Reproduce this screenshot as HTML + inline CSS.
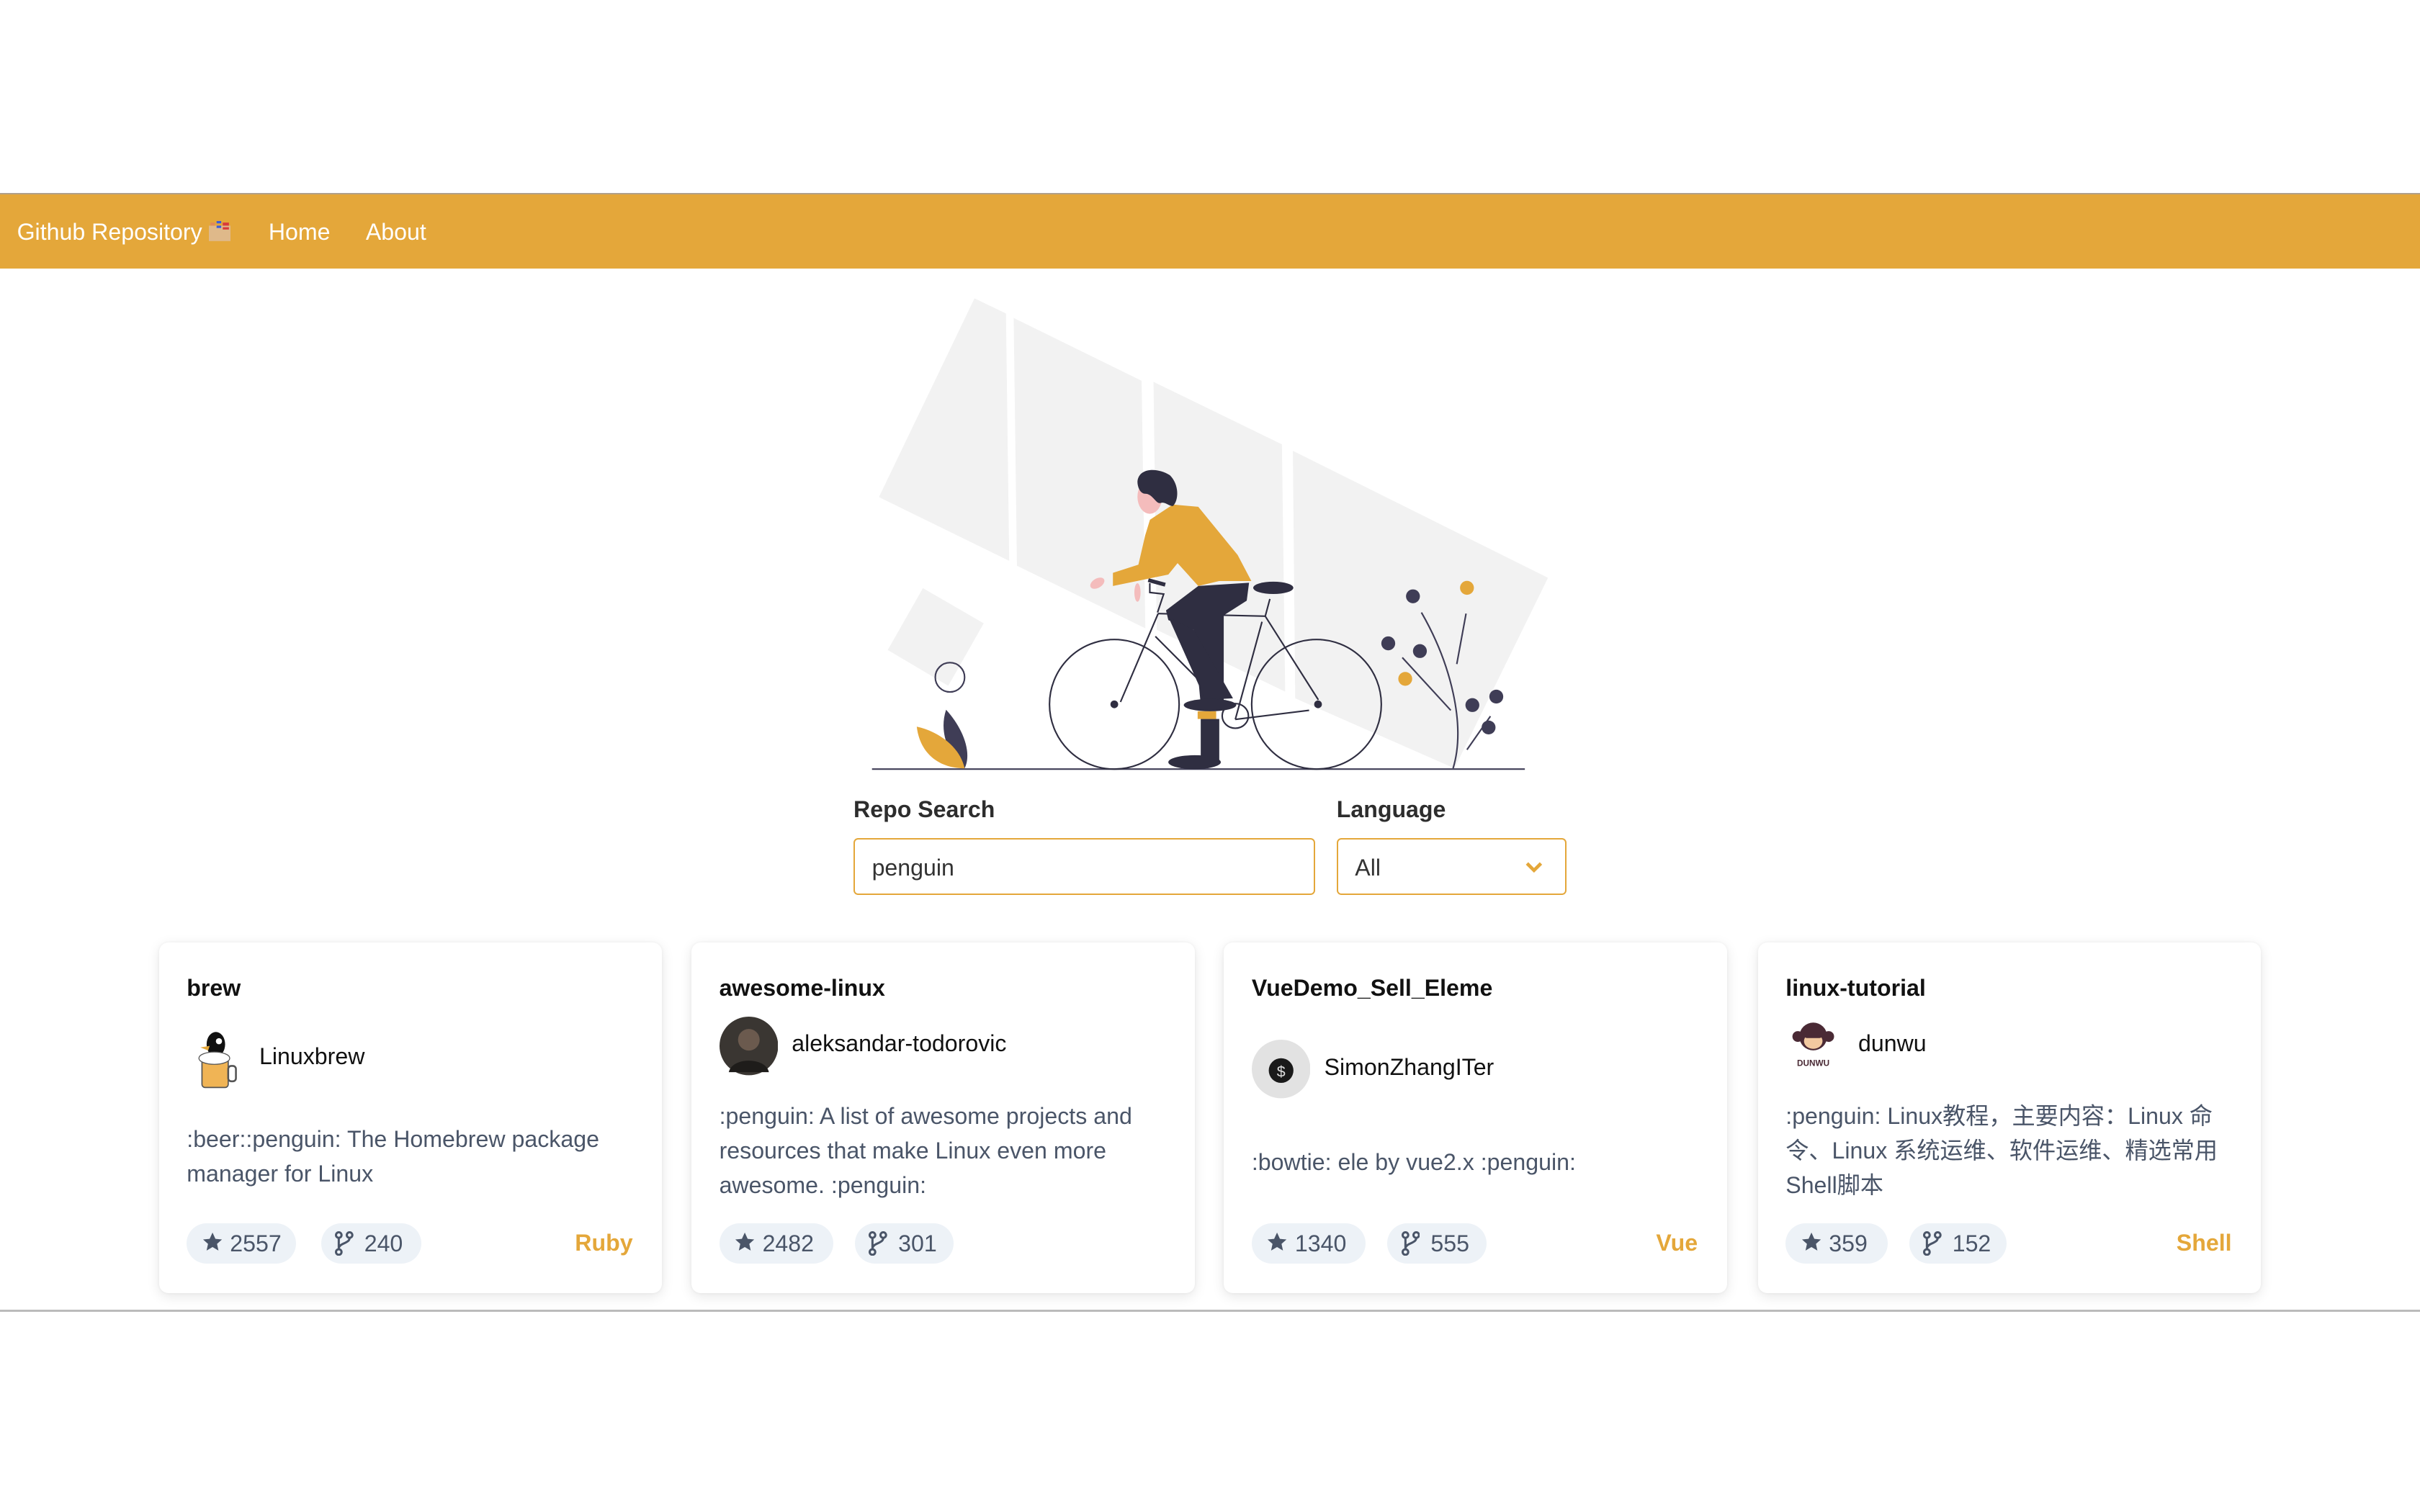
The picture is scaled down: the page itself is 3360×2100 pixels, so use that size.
<!DOCTYPE html>
<html><head><meta charset="utf-8"><style>
html,body{margin:0;padding:0;background:#fff;}
#w{position:relative;width:1568px;height:980px;zoom:2.142857;overflow:hidden;font-family:"Liberation Sans","Noto Sans CJK SC",sans-serif;}
.a{position:absolute;white-space:nowrap;}
.nav{position:absolute;left:0;top:125px;width:1568px;height:49px;background:#e4a73a;border-top:1px solid #b0a08a;box-sizing:border-box;}
.nav span{position:absolute;top:16px;color:#fff;font-size:15px;}
.lbl{font-weight:bold;font-size:15px;color:#2d2d2d;}
.inp{position:absolute;border:1px solid #e4a73a;border-radius:3px;height:37px;box-sizing:border-box;font-size:15px;color:#333;padding:10px 0 0 11px;}
.card{position:absolute;top:611px;width:326px;height:227px;background:#fff;border-radius:6px;box-shadow:0 2px 8px rgba(0,0,0,.10),0 0 2px rgba(0,0,0,.05);}
.card .t{position:absolute;left:18px;top:21px;font-weight:bold;font-size:15px;color:#111;}
.card .n{position:absolute;font-size:15px;color:#111;}
.card .d{position:absolute;left:18px;font-size:15px;color:#4a5568;line-height:22.5px;white-space:nowrap;}
.b{position:absolute;top:182px;height:26px;border-radius:13px;background:#edf2f7;color:#4a5568;font-size:15px;line-height:27px;box-sizing:border-box;padding-left:28px;}
.b svg{position:absolute;left:9px;top:5px;}
.lang{position:absolute;right:19px;top:186px;color:#e4a73a;font-weight:bold;font-size:15px;}
.av{position:absolute;left:18px;}
</style></head><body><div id="w">
<div class="nav"><span style="left:11px">Github Repository <svg width="14" height="13" viewBox="0 0 14 13" style="vertical-align:-1px"><rect x="0" y="3" width="14" height="10" fill="#dfb98a"/><rect x="1" y="1" width="3" height="2" fill="#e08a5a"/><rect x="5" y="0" width="3" height="1.5" fill="#3a5bdc"/><rect x="5" y="3" width="3" height="1.5" fill="#3a5bdc"/><rect x="9" y="1" width="4" height="2" fill="#d83a3a"/><rect x="9" y="4" width="4" height="1.5" fill="#d83a3a"/></svg></span><span style="left:174px">Home</span><span style="left:237px">About</span></div>

<svg class="a" style="left:0;top:0" width="1568" height="980" viewBox="0 0 1568 980">
<g fill="#f2f2f2">
<polygon points="631.4,193.4 651.8,203.2 653.9,363.5 569.5,322.2"/>
<polygon points="656.8,206.1 739.7,246.8 742.1,407.2 658.9,366.7"/>
<polygon points="747.4,247.5 830.6,288 832.7,448.3 749.5,408.2"/>
<polygon points="837.7,292.2 1003,374.5 942.4,498 839.2,452.6"/>
<polygon points="598,381.2 637.4,404 614.4,444.5 575.2,421.3"/>
</g>
<line x1="565" y1="498.5" x2="988" y2="498.5" stroke="#3f3d56" stroke-width="1"/>
<circle cx="615.5" cy="439" r="9.5" fill="none" stroke="#3f3d56" stroke-width="1"/>
<path d="M613 460 C624 472 630 488 625 498 C615 490 608 475 613 460Z" fill="#3f3d56"/>
<path d="M594 471 C608 474 622 484 625 498 C608 498 596 488 594 471Z" fill="#e4a73a"/>
<!-- plant -->
<g stroke="#3f3d56" stroke-width="1" fill="none">
<path d="M941.5 498 C950 470 940 430 921 397"/>
<line x1="949.9" y1="397.7" x2="943.9" y2="430.4"/>
<line x1="908.6" y1="426.2" x2="940" y2="460.4"/>
<line x1="965.7" y1="464.2" x2="950.5" y2="485.9"/>
</g>
<g fill="#3f3d56"><circle cx="915.5" cy="386.5" r="4.5"/><circle cx="899.5" cy="417" r="4.5"/><circle cx="920" cy="422" r="4.5"/><circle cx="954" cy="457" r="4.5"/><circle cx="969.5" cy="451.5" r="4.5"/><circle cx="964.5" cy="471.5" r="4.5"/></g>
<g fill="#e4a73a"><circle cx="950.5" cy="381" r="4.5"/><circle cx="910.5" cy="440" r="4.5"/></g>
<!-- bike -->
<g stroke="#2f2e41" stroke-width="1" fill="none">
<circle cx="722" cy="456.5" r="42"/>
<circle cx="853" cy="456.5" r="42"/>
<line x1="750.4" y1="397.7" x2="819.8" y2="399.4"/>
<line x1="750.4" y1="397.7" x2="726" y2="455"/>
<line x1="748.6" y1="412.5" x2="778" y2="442"/>
<line x1="819.8" y1="399.4" x2="854.2" y2="453.6"/>
<line x1="800.4" y1="466.3" x2="848.2" y2="460.4"/>
<line x1="817.7" y1="403" x2="800.4" y2="466.3"/>
<ellipse cx="800.4" cy="464" rx="8.5" ry="8"/>
<line x1="822.8" y1="388.2" x2="819.8" y2="399.4"/>
<polyline points="745,378 745,384 754,385 750,397"/>
</g>
<line x1="744" y1="376" x2="755" y2="379" stroke="#2f2e41" stroke-width="2.5"/>
<circle cx="722" cy="456.5" r="2.5" fill="#2f2e41"/><circle cx="854" cy="456.5" r="2.5" fill="#2f2e41"/>
<!-- person -->
<ellipse cx="825" cy="381" rx="13" ry="4" fill="#2f2e41"/>
<rect x="778" y="466" width="12" height="28" fill="#2f2e41"/>
<ellipse cx="774" cy="494" rx="17" ry="4.5" fill="#2f2e41"/>
<rect x="776" y="461" width="12" height="5" fill="#e4a73a"/>
<polygon points="776.4,379.8 809.3,377.7 807.8,389.3 792.9,398.8 792.9,456.8 778,456.8 773.5,408.3 757,401.9 755.5,395.6" fill="#2f2e41"/>
<polygon points="757,399.8 773.5,408.3 798.9,452.6 781,453.6" fill="#2f2e41"/>
<ellipse cx="784" cy="457" rx="17" ry="4" fill="#2f2e41"/>
<ellipse cx="745" cy="322" rx="8" ry="11" fill="#f4bcbc"/>
<ellipse cx="711" cy="378" rx="5" ry="3" fill="#f4bcbc" transform="rotate(-30 711 378)"/>
<ellipse cx="737" cy="384" rx="2" ry="6" fill="#f4bcbc"/>
<polygon points="745.1,336.9 760,327 776.4,328.5 801.9,359.7 810.8,376.6 789.9,376.6 776.4,379.8 763,365 757,372.4 721.1,379.8 721.1,371.3 737.6,366 742,347" fill="#e4a73a"/>
<path d="M737 312 C738 303 750 303 758 308 C764 314 764 324 760 328 C757 328 755 325 752 326 C749 327 747 320 742 320 C739 320 737 316 737 312Z" fill="#2f2e41"/>
</svg>

<div class="a lbl" style="left:553px;top:516px">Repo Search</div>
<div class="a lbl" style="left:866px;top:516px">Language</div>
<div class="inp" style="left:553px;top:543px;width:299px">penguin</div>
<div class="inp" style="left:866px;top:543px;width:149px">All<svg style="position:absolute;right:14px;top:14px" width="12" height="8" viewBox="0 0 12 8"><path d="M1.5 1.5 L6 6 L10.5 1.5" stroke="#e4a73a" stroke-width="2.2" fill="none"/></svg></div>

<div class="card" style="left:103px">
<div class="t">brew</div>
<svg class="av" style="top:56px" width="36" height="40" viewBox="0 0 36 40"><ellipse cx="19" cy="10" rx="6" ry="8" fill="#111"/><circle cx="21" cy="8" r="2" fill="#fff"/><path d="M9 12 L15 11 L14 14Z" fill="#e4a73a"/><rect x="10" y="19" width="17" height="19" rx="2" fill="#f0b455" stroke="#555" stroke-width="0.8"/><rect x="27" y="24" width="5" height="10" rx="2" fill="none" stroke="#555" stroke-width="1.2"/><ellipse cx="18" cy="19" rx="10" ry="4" fill="#fff" stroke="#555" stroke-width="0.6"/></svg>
<div class="n" style="left:65px;top:65px">Linuxbrew</div>
<div class="d" style="top:116px">:beer::penguin: The Homebrew package<br>manager for Linux</div>
<div class="b" style="left:18px;width:71px"><svg width="15" height="14" viewBox="0 0 24 24"><path d="M12 1.5l3.2 7 7.3.7-5.5 4.9 1.6 7.4L12 17.6l-6.6 3.9 1.6-7.4L1.5 9.2l7.3-.7z" fill="#4a5568"/></svg>2557</div>
<div class="b" style="left:105px;width:65px"><svg width="12" height="16" viewBox="0 0 12 16"><circle cx="2.5" cy="2.5" r="1.8" fill="none" stroke="#4a5568" stroke-width="1.4"/><circle cx="2.5" cy="13.5" r="1.8" fill="none" stroke="#4a5568" stroke-width="1.4"/><circle cx="9.5" cy="2.5" r="1.8" fill="none" stroke="#4a5568" stroke-width="1.4"/><path d="M2.5 4.3V11.7M9.5 4.3C9.5 8 3 7.5 2.5 11" fill="none" stroke="#4a5568" stroke-width="1.4"/></svg>240</div>
<div class="lang">Ruby</div>
</div>

<div class="card" style="left:448px">
<div class="t">awesome-linux</div>
<svg class="av" style="top:48px" width="38" height="38" viewBox="0 0 38 38"><circle cx="19" cy="19" r="19" fill="#3a3632"/><circle cx="19" cy="15" r="7" fill="#6b5a4e"/><path d="M6 36 C8 26 30 26 32 36Z" fill="#1e1c1a"/></svg>
<div class="n" style="left:65px;top:57px">aleksandar-todorovic</div>
<div class="d" style="top:101px">:penguin: A list of awesome projects and<br>resources that make Linux even more<br>awesome. :penguin:</div>
<div class="b" style="left:18px;width:74px"><svg width="15" height="14" viewBox="0 0 24 24"><path d="M12 1.5l3.2 7 7.3.7-5.5 4.9 1.6 7.4L12 17.6l-6.6 3.9 1.6-7.4L1.5 9.2l7.3-.7z" fill="#4a5568"/></svg>2482</div>
<div class="b" style="left:106px;width:64px"><svg width="12" height="16" viewBox="0 0 12 16"><circle cx="2.5" cy="2.5" r="1.8" fill="none" stroke="#4a5568" stroke-width="1.4"/><circle cx="2.5" cy="13.5" r="1.8" fill="none" stroke="#4a5568" stroke-width="1.4"/><circle cx="9.5" cy="2.5" r="1.8" fill="none" stroke="#4a5568" stroke-width="1.4"/><path d="M2.5 4.3V11.7M9.5 4.3C9.5 8 3 7.5 2.5 11" fill="none" stroke="#4a5568" stroke-width="1.4"/></svg>301</div>
</div>

<div class="card" style="left:793px">
<div class="t">VueDemo_Sell_Eleme</div>
<svg class="av" style="top:63px" width="38" height="38" viewBox="0 0 38 38"><circle cx="19" cy="19" r="19" fill="#e2e2e2"/><circle cx="19" cy="20" r="8" fill="#1a1a1a"/><text x="19" y="24" font-size="10" fill="#ddd" text-anchor="middle" font-family="Liberation Sans">$</text></svg>
<div class="n" style="left:65px;top:72px">SimonZhangITer</div>
<div class="d" style="top:131px">:bowtie: ele by vue2.x :penguin:</div>
<div class="b" style="left:18px;width:74px"><svg width="15" height="14" viewBox="0 0 24 24"><path d="M12 1.5l3.2 7 7.3.7-5.5 4.9 1.6 7.4L12 17.6l-6.6 3.9 1.6-7.4L1.5 9.2l7.3-.7z" fill="#4a5568"/></svg>1340</div>
<div class="b" style="left:106px;width:64px"><svg width="12" height="16" viewBox="0 0 12 16"><circle cx="2.5" cy="2.5" r="1.8" fill="none" stroke="#4a5568" stroke-width="1.4"/><circle cx="2.5" cy="13.5" r="1.8" fill="none" stroke="#4a5568" stroke-width="1.4"/><circle cx="9.5" cy="2.5" r="1.8" fill="none" stroke="#4a5568" stroke-width="1.4"/><path d="M2.5 4.3V11.7M9.5 4.3C9.5 8 3 7.5 2.5 11" fill="none" stroke="#4a5568" stroke-width="1.4"/></svg>555</div>
<div class="lang">Vue</div>
</div>

<div class="card" style="left:1139px">
<div class="t">linux-tutorial</div>
<svg class="av" style="top:50px" width="36" height="36" viewBox="0 0 36 36"><circle cx="8" cy="11" r="3.5" fill="#4a2a35"/><circle cx="28" cy="11" r="3.5" fill="#4a2a35"/><circle cx="18" cy="11" r="9" fill="#4a2a35"/><ellipse cx="18" cy="14" rx="6" ry="5" fill="#f2c9a0"/><rect x="12" y="8" width="12" height="4" rx="2" fill="#4a2a35"/><text x="18" y="30" font-size="5.5" font-weight="bold" fill="#4a2a35" text-anchor="middle" font-family="Liberation Sans">DUNWU</text></svg>
<div class="n" style="left:65px;top:57px">dunwu</div>
<div class="d" style="top:101px">:penguin: Linux教程，主要内容：Linux 命<br>令、Linux 系统运维、软件运维、精选常用<br>Shell脚本</div>
<div class="b" style="left:18px;width:66px"><svg width="15" height="14" viewBox="0 0 24 24"><path d="M12 1.5l3.2 7 7.3.7-5.5 4.9 1.6 7.4L12 17.6l-6.6 3.9 1.6-7.4L1.5 9.2l7.3-.7z" fill="#4a5568"/></svg>359</div>
<div class="b" style="left:98px;width:63px"><svg width="12" height="16" viewBox="0 0 12 16"><circle cx="2.5" cy="2.5" r="1.8" fill="none" stroke="#4a5568" stroke-width="1.4"/><circle cx="2.5" cy="13.5" r="1.8" fill="none" stroke="#4a5568" stroke-width="1.4"/><circle cx="9.5" cy="2.5" r="1.8" fill="none" stroke="#4a5568" stroke-width="1.4"/><path d="M2.5 4.3V11.7M9.5 4.3C9.5 8 3 7.5 2.5 11" fill="none" stroke="#4a5568" stroke-width="1.4"/></svg>152</div>
<div class="lang">Shell</div>
</div>

<div class="a" style="left:0;top:849px;width:1568px;height:1.5px;background:#bbb"></div>
</div></body></html>
